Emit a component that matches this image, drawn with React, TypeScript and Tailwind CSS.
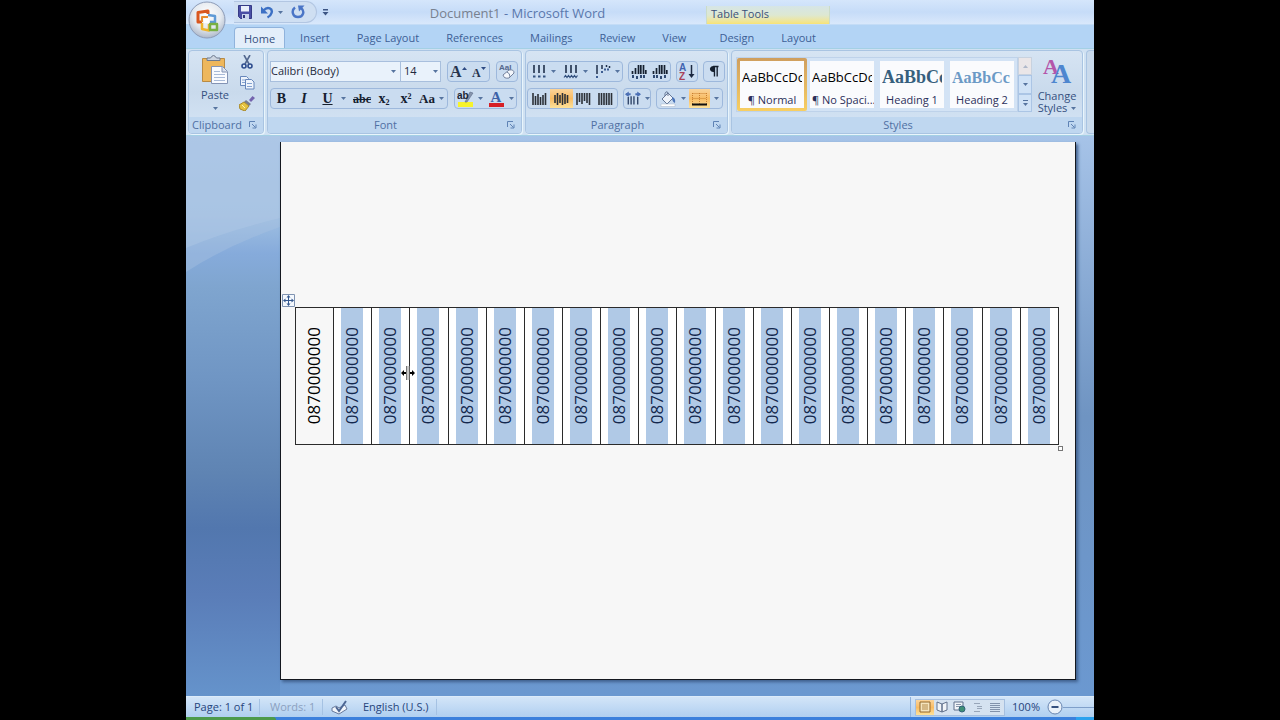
import type { ReactNode } from 'react'
import clsx from 'clsx'

const TABS = ['Home', 'Insert', 'Page Layout', 'References', 'Mailings', 'Review', 'View', 'Design', 'Layout']

const STYLES = [
  { name: '¶ Normal',     sample: 'AaBbCcDc', look: 'text-[13px] text-black' },
  { name: '¶ No Spaci...', sample: 'AaBbCcDc', look: 'text-[13px] text-black' },
  { name: 'Heading 1',    sample: 'AaBbCc',   look: 'text-[18px] font-bold text-[#365f7d] font-["Liberation_Serif",serif]' },
  { name: 'Heading 2',    sample: 'AaBbCc',   look: 'text-[16px] font-bold text-[#6c9ac6] font-["Liberation_Serif",serif]' },
]

const PHONE = '0870000000'
const COLUMNS = Array.from({ length: 20 }, (_, i) => i)

function Arrow({ className = '' }: { className?: string }) {
  return (
    <svg width="5" height="3" viewBox="0 0 5 3" className={clsx('shrink-0', className)}>
      <path d="M0 0h5L2.5 3z" fill="#56749f" />
    </svg>
  )
}

function Box({ children, className }: { children: ReactNode; className: string }) {
  return (
    <div className={clsx('flex h-[21px] shrink-0 items-stretch rounded-sm border border-[#9db8dc] bg-[#cadcf0]', className)}>
      {children}
    </div>
  )
}

function Tool({ label, children, className = 'flex-1', drop = false, on = false }: {
  label: string; children: ReactNode; className?: string; drop?: boolean; on?: boolean
}) {
  return (
    <button type="button" aria-label={label}
      className={clsx('flex items-center justify-center gap-1', className, on && 'bg-linear-to-b from-[#fbd49a] via-[#f8bb62] to-[#fde29a]')}>
      {children}
      {drop && <Arrow />}
    </button>
  )
}

function Launcher() {
  return (
    <svg width="8" height="8" viewBox="0 0 8 8" fill="none" stroke="#5f83b5" className="shrink-0">
      <path d="M.5 6V.5H6" />
      <path d="M3 3l3.5 3.5M7 3.5V7H3.5" />
    </svg>
  )
}

function Group({ title, children, className }: { title: string; children: ReactNode; className: string }) {
  return (
    <section className={clsx('flex flex-col overflow-hidden rounded-sm border border-[#a9c4e2] bg-linear-to-b from-[#d6e4f3] via-[#c9daec] to-[#d5e5f6] shadow-[1px_1px_0_#e8f5fc]', className)}>
      <div className="flex min-h-0 flex-1">{children}</div>
      <div className="flex h-4 items-center bg-[#bfd7f0] pr-1.5 text-[11px] text-[#4f70a3]">
        <span className="flex-1 pr-1 text-center">{title}</span>
        <Launcher />
      </div>
    </section>
  )
}

// text direction is vertical, so the list and alignment icons are all drawn as upright strokes
function ListIcon({ kind }: { kind: 'bullets' | 'numbers' | 'levels' }) {
  return (
    <svg width="16" height="15" viewBox="0 0 16 15" fill="none" stroke="#1f2f4a">
      {kind === 'levels' ? (
        <>
          <path d="M2 1v9M7 1v4" strokeWidth="1.5" />
          <path d="M11.5 1v2M14.5 2v2" strokeWidth="1.5" />
          <path d="M1 13h3M6 8h3M9 5.5h6" stroke="#3d5d92" strokeWidth="2" strokeDasharray="2 1" />
        </>
      ) : (
        <>
          <path d="M3 1v8M8 1v8M13 1v8" strokeWidth="1.6" />
          <path d={kind === 'bullets' ? 'M2 12.500h2.500M7 12.500h2.500M12 12.500h2.500' : 'M1 13.500l1.500-2 1.500 2 1.500-2 1.500 2 1.500-2 1.500 2 1.500-2 1.500 2 1.500-2'}
            stroke="#33517f" strokeWidth={kind === 'bullets' ? 2 : 1.2} />
        </>
      )}
    </svg>
  )
}

function IndentIcon({ flip = false }: { flip?: boolean }) {
  return (
    <svg width="16" height="16" viewBox="0 0 16 16" fill="none" stroke="#16202f">
      <path d="M1.500 7v3M4.500 4v6M7.500 1v9M9.800 1v9M12.500 1v9M14.800 6v4" strokeWidth="1.700" />
      <path d={flip ? 'M1 12.500h6M8 13.500h3M12 12.500h3' : 'M1 12.500h3M5 13.500h3M9 12.500h6'} stroke="#304a72" strokeWidth="3" strokeDasharray="2 1" />
    </svg>
  )
}

function AlignIcon({ ends }: { ends: [number, number][] }) {
  return (
    <svg width="15" height="14" viewBox="0 0 15 14" stroke="#2b3037" strokeWidth="1.600">
      {ends.map(([top, bottom], i) => <path key={i} d={`M${i * 2.5 + 1} ${top}V${bottom}`} />)}
    </svg>
  )
}

function Orb() {
  return (
    <svg width="38" height="38" viewBox="0 0 38 38">
      <defs>
        <radialGradient id="orb" cx="50%" cy="35%" r="65%">
          <stop offset="0" stopColor="#ffffff" />
          <stop offset=".6" stopColor="#e4e9ef" />
          <stop offset="1" stopColor="#aeb9ca" />
        </radialGradient>
      </defs>
      <circle cx="19" cy="19" r="18" fill="url(#orb)" stroke="#8d9cb8" />
      <g fill="none" strokeLinejoin="round">
        <path d="M20 13v-3l-10 1.500v9.500h4" stroke="#d9571f" strokeWidth="3" />
        <path d="M14 21v-5h6" stroke="#e98b2e" strokeWidth="2" />
        <path d="M20 14l7 1v6h-5" stroke="#5f9ad6" strokeWidth="2.500" />
        <path d="M14 22v6l7 1.500v-6.500" stroke="#efb52c" strokeWidth="2.500" />
        <path d="M22 23h7v6h-7z" stroke="#78b043" strokeWidth="2.500" />
      </g>
      <path d="M16 18h5v4h-5z" fill="#fff" />
    </svg>
  )
}

function TitleArea() {
  return (
    <header className="flex h-12 shrink-0 bg-linear-to-b from-[#d5e6fb] from-0% via-[#c6dcf8] via-25% to-[#d9e8fb] to-50%">
      <div className="flex w-12 flex-col bg-linear-to-b from-transparent from-50% to-[#b3d4f5] to-50% pl-0.5 pt-px">
        <button type="button" aria-label="Office Button" className="h-[38px] w-[38px]"><Orb /></button>
      </div>
      <div className="flex min-w-0 flex-1 flex-col">
        <div className="flex h-6 shrink-0">
          <div className="flex w-[472px] shrink-0 items-center">
            <div className="flex h-[22px] w-[83px] items-center gap-1 rounded-r-full border border-l-0 border-[#b2c6e2] bg-[#cfdff2] pl-1">
              <button type="button" aria-label="Save">
                <svg width="14" height="14" viewBox="0 0 14 14">
                  <path d="M.5 .5h13v13h-11l-2-2z" fill="#4a4fa5" stroke="#363b86" />
                  <path d="M3 1h8v5.500H3z" fill="#eaf0fb" />
                  <path d="M4 9h7v5H4z" fill="#c9d5ec" />
                  <path d="M5 10h2v3H5z" fill="#30357c" />
                </svg>
              </button>
              <button type="button" aria-label="Undo" className="ml-1 flex items-center gap-1">
                <svg width="14" height="14" viewBox="0 0 14 14" fill="none">
                  <path d="M3.500 5.500C8 .5 13 4 11.500 8c-.5 2-2 3.500-4 4.500" stroke="#3c70c4" strokeWidth="2.400" />
                  <path d="M1 1.500v7h7z" fill="#3c70c4" />
                </svg>
                <Arrow />
              </button>
              <button type="button" aria-label="Repeat" className="ml-1">
                <svg width="14" height="14" viewBox="0 0 14 14" fill="none">
                  <path d="M4 2.500C0 5.500 1.500 12 7 12s7-6 3-9" stroke="#4a75c6" strokeWidth="2.400" />
                  <path d="M7 .5h6.500L8 6.500z" fill="#4a75c6" />
                </svg>
              </button>
            </div>
            <button type="button" aria-label="Customize Quick Access Toolbar" className="flex w-3 justify-end">
              <svg width="7" height="7" viewBox="0 0 7 7"><path d="M1 0h5v1.500H1zM.5 3h6l-3 3.500z" fill="#3c5584" /></svg>
            </button>
            <h1 className="flex-1 pt-[3px] text-center text-[13px] text-[#5a78ac]">
              <span className="text-[#78818f]">Document1</span> - Microsoft Word
            </h1>
          </div>
          <div className="mt-1.5 w-[124px] shrink-0 border-x border-[#cbdcc9] bg-linear-to-b from-[#d6e5e6] via-[#dde8d2] to-[#f8e375] pl-1 text-[11px] leading-4 text-[#3b5078]">
            Table Tools
          </div>
        </div>
        <nav className="flex min-w-0 flex-1 items-end gap-[3px] border-t border-[#c4dcf6] bg-[#b3d4f5]">
          {TABS.map((tab, i) => (
            <button key={tab} type="button"
              className={clsx('h-[21px] shrink-0 whitespace-nowrap pt-0.5 text-[11px]',
                i === 0 ? 'rounded-t-sm border border-b-0 border-[#90b3dc] bg-[#e3eefa] px-[9px] text-[#35507f]' : 'px-3 text-[#3d5f96]',
                tab === 'Design' && 'ml-1.5')}>
              {tab}
            </button>
          ))}
        </nav>
      </div>
    </header>
  )
}

function ClipboardGroup() {
  return (
    <Group title="Clipboard" className="w-[76px] shrink-0">
      <button type="button" className="flex w-[52px] flex-col items-center pt-[3px] text-[11px] leading-4 text-[#35507f]">
        <svg width="28" height="31" viewBox="0 0 28 31" className="mb-0.5">
          <path d="M1.500 4.500h22v23h-22z" fill="#eeb75c" stroke="#b98b44" />
          <path d="M6 6.500V4h3.500q3-5 6 0H19v2.500z" fill="#cdd5e0" stroke="#6e7a8e" />
          <path d="M10.500 12.500h11l5 5v12h-16z" fill="#f9fbff" stroke="#8494b4" />
          <path d="M21 13v5h5" fill="#d7e0ee" stroke="#8494b4" />
          <path d="M13 17.500h6M13 20.500h11M13 23.500h11M13 26.500h11" stroke="#a9bbd8" />
        </svg>
        Paste
        <Arrow className="mt-1" />
      </button>
      <div className="flex w-3 flex-col items-center gap-1.5 pt-1">
        <button type="button" aria-label="Cut">
          <svg width="14" height="15" viewBox="0 0 14 15" fill="none">
            <path d="M4 0l5 9M10 0L5 9" stroke="#53688f" strokeWidth="1.600" />
            <circle cx="4" cy="11" r="2" stroke="#2e4d8e" strokeWidth="1.600" />
            <circle cx="10" cy="11" r="2" stroke="#2e4d8e" strokeWidth="1.600" />
          </svg>
        </button>
        <button type="button" aria-label="Copy">
          <svg width="16" height="14" viewBox="0 0 16 14" fill="#eef4fc" stroke="#6787bb">
            <path d="M1.500 .5h6l2 2v7h-8z" />
            <path d="M6.500 3.500h6l2.500 2.500v7H6.500z" />
            <path d="M8 7.500h5M8 10.500h5M3 4h3M3 6.500h3" stroke="#86a3d0" />
          </svg>
        </button>
        <button type="button" aria-label="Format Painter">
          <svg width="16" height="15" viewBox="0 0 16 15">
            <path d="M10 4l3.500-4L16 2l-4 4z" fill="#7464ae" />
            <path d="M7 4l5 4-2 2-5-4z" fill="#777d8e" />
            <path d="M5 6l5 4-4 5-5-2-1-4z" fill="#e4c23f" stroke="#a8892b" />
            <path d="M3 9l3 3" stroke="#fff1a8" />
          </svg>
        </button>
      </div>
    </Group>
  )
}

function FontGroup() {
  return (
    <Group title="Font" className="w-[255px] shrink-0">
      <div className="flex flex-1 flex-col gap-1.5 px-0.5 pt-2.5">
        <div className="flex">
          <label className="flex h-[21px] w-[131px] items-center border border-[#a8bfdd] bg-[#e9f2fb] pr-1">
            <select aria-label="Font" className="min-w-0 flex-1 appearance-none bg-transparent text-[11px] text-[#1f2a3c]">
              <option>Calibri (Body)</option>
            </select>
            <Arrow />
          </label>
          <label className="flex h-[21px] w-10 items-center border border-l-0 border-[#a8bfdd] bg-[#e9f2fb] pl-[3px] pr-0.5">
            <select aria-label="Font Size" className="min-w-0 flex-1 appearance-none bg-transparent text-[11px] text-[#1f2a3c]">
              <option>14</option>
            </select>
            <Arrow />
          </label>
          <Box className="ml-1.5 w-[43px] font-['Liberation_Serif',serif] font-bold text-[#26344e]">
            <Tool label="Grow Font">
              <span className="-mr-1 text-[16px]">A</span>
              <svg width="5" height="10" viewBox="0 0 5 10"><path d="M0 3h5L2.500 0z" fill="#2d4a83" /></svg>
            </Tool>
            <Tool label="Shrink Font">
              <span className="-mr-1 pt-0.5 text-[12px]">A</span>
              <svg width="5" height="10" viewBox="0 0 5 10"><path d="M0 0h5L2.500 3z" fill="#2d4a83" /></svg>
            </Tool>
          </Box>
          <Box className="ml-1.5 w-[22px]">
            <Tool label="Clear Formatting">
              <svg width="18" height="17" viewBox="0 0 18 17">
                <text x="1" y="7" fontSize="8" fontWeight="bold" fontFamily="Liberation Sans" fill="#55688c">AaI</text>
                <path d="M5 12l6-5q5-1 5 3l-5 5q-5 1-6-3z" fill="#f4f7fc" stroke="#72819c" />
                <path d="M9 9q3 1 3 5" fill="none" stroke="#72819c" />
              </svg>
            </Tool>
          </Box>
        </div>
        <div className="flex gap-1.5">
          <Box className="w-[178px] font-['Liberation_Serif',serif] text-[14px] font-bold text-[#15202f]">
            <Tool label="Bold" className="w-[21px]">B</Tool>
            <Tool label="Italic" className="w-6"><i>I</i></Tool>
            <Tool label="Underline" className="w-9" drop><u className="mr-1">U</u></Tool>
            <Tool label="Strikethrough" className="w-5"><s className="text-[12px]">abc</s></Tool>
            <Tool label="Subscript" className="w-6"><span>x<sub className="text-[8px]">2</sub></span></Tool>
            <Tool label="Superscript" className="w-5"><span>x<sup className="text-[8px]">2</sup></span></Tool>
            <Tool label="Change Case" drop><span className="text-[13px]">Aa</span></Tool>
          </Box>
          <Box className="w-[63px]">
            <Tool label="Text Highlight Color" drop>
              <svg width="17" height="17" viewBox="0 0 17 17">
                <path d="M1 12h15v5H1z" fill="#f6f32b" />
                <path d="M8 12l5-10 3 1-6 9z" fill="#8795ad" stroke="#5b6a86" strokeWidth=".6" />
                <text x="0" y="9" fontSize="10" fontWeight="bold" fontFamily="Liberation Sans" fill="#1b2535">ab</text>
              </svg>
            </Tool>
            <Tool label="Font Color" drop>
              <svg width="17" height="17" viewBox="0 0 17 17">
                <text x="2.500" y="12" fontSize="15" fontWeight="bold" fontFamily="Liberation Serif" fill="#3c62a8">A</text>
                <path d="M1 13h15v4H1z" fill="#d61f26" />
              </svg>
            </Tool>
          </Box>
        </div>
      </div>
    </Group>
  )
}

function ParagraphGroup() {
  return (
    <Group title="Paragraph" className="w-[203px] shrink-0">
      <div className="flex flex-1 flex-col gap-1.5 px-px pt-2.5">
        <div className="flex gap-[5px]">
          <Box className="w-[96px]">
            <Tool label="Bullets" drop><ListIcon kind="bullets" /></Tool>
            <Tool label="Numbering" drop className="w-[34px]"><ListIcon kind="numbers" /></Tool>
            <Tool label="Multilevel List" drop><ListIcon kind="levels" /></Tool>
          </Box>
          <Box className="w-[43px]">
            <Tool label="Decrease Indent"><IndentIcon /></Tool>
            <Tool label="Increase Indent"><IndentIcon flip /></Tool>
          </Box>
          <Box className="w-[22px]">
            <Tool label="Sort">
              <svg width="17" height="18" viewBox="0 0 17 18">
                <text x="0" y="8" fontSize="10" fontWeight="bold" fontFamily="Liberation Sans" fill="#3f63b0">A</text>
                <text x="0" y="17" fontSize="10" fontWeight="bold" fontFamily="Liberation Sans" fill="#a8425a">Z</text>
                <path d="M12.500 2v11" stroke="#1c2940" strokeWidth="1.500" />
                <path d="M9.500 11h6l-3 4z" fill="#1c2940" />
              </svg>
            </Tool>
          </Box>
          <Box className="w-[22px]">
            <Tool label="Show Paragraph Marks">
              <svg width="10" height="13" viewBox="0 0 11 13">
                <path d="M4.500 1h6M6 1v11M9 1v11" stroke="#15202f" strokeWidth="1.500" />
                <path d="M5.500 .5v6.500C-.5 7.500-.5 0 5.500 .5z" fill="#15202f" />
              </svg>
            </Tool>
          </Box>
        </div>
        <div className="flex gap-[5px]">
          <Box className="w-[91px]">
            <Tool label="Align Bottom"><AlignIcon ends={[[1, 13], [4, 13], [2, 13], [5, 13], [3, 13], [1, 13]]} /></Tool>
            <Tool label="Center" on><AlignIcon ends={[[3, 11], [1, 13], [3, 11], [1, 13], [2, 12], [3, 11]]} /></Tool>
            <Tool label="Align Top"><AlignIcon ends={[[1, 13], [1, 10], [1, 12], [1, 9], [1, 11], [1, 13]]} /></Tool>
            <Tool label="Justify"><AlignIcon ends={[[1, 13], [1, 13], [1, 13], [1, 13], [1, 13], [1, 13]]} /></Tool>
          </Box>
          <Box className="w-[28px]">
            <Tool label="Line Spacing" drop className="w-full">
              <svg width="16" height="15" viewBox="0 0 17 15" fill="none">
                <path d="M3.500 6v8M6.500 5v9M9.500 5v9M13.500 6v8" stroke="#33486c" strokeWidth="1.500" />
                <path d="M1 3h5M11 3h5" stroke="#4b6fb5" strokeWidth="2" />
                <path d="M4 0L0 3l4 3zM13 0l4 3-4 3z" fill="#4b6fb5" />
              </svg>
            </Tool>
          </Box>
          <Box className="w-[67px]">
            <Tool label="Shading" drop>
              <svg width="17" height="16" viewBox="0 0 17 16">
                <path d="M2 8l6-6 5 5-6 6z" fill="#eef3fa" stroke="#667795" />
                <path d="M8 5V1.500q-2-2-3 1V5" fill="none" stroke="#667795" />
                <path d="M12 6q4 1 3 6-3-1-3-6z" fill="#4b74b8" />
                <path d="M1 13h14v2.500H1z" fill="#fff" stroke="#a6b4c9" strokeWidth=".5" />
              </svg>
            </Tool>
            <Tool label="Borders" className="w-[21px]" on>
              <svg width="15" height="14" viewBox="0 0 15 14" fill="none">
                <path d="M.5 1.500h14M.5 6.500h14M.5 1v11M7.500 1v11M14.500 1v11" stroke="#c98030" strokeDasharray="1 1" />
                <path d="M0 12.500h15" stroke="#111" strokeWidth="2" />
              </svg>
            </Tool>
            <Tool label="Borders menu" className="w-3"><Arrow /></Tool>
          </Box>
        </div>
      </div>
    </Group>
  )
}

function StylesGroup() {
  return (
    <Group title="Styles" className="min-w-0 flex-1">
      <div className="ml-1 mt-1.5 flex h-[55px] shrink-0 border border-[#bed2ea] bg-[#d3e3f5]">
        {STYLES.map((s, i) => (
          <button key={s.name} type="button"
            className={clsx('flex w-[70px] flex-col p-[3px]', i === 0 && 'rounded-xs bg-linear-to-b from-[#cf9e5e] to-[#f8cf62]')}>
            <span className="flex w-full flex-1 flex-col overflow-hidden bg-[#fafbfd] px-0.5">
              <span className={clsx('flex h-[31px] items-center overflow-hidden pt-0.5 whitespace-nowrap', s.look)}>{s.sample}</span>
              <span className="whitespace-nowrap text-center text-[11px] leading-4 text-[#2b2f5a]">{s.name}</span>
            </span>
          </button>
        ))}
      </div>
      <div className="mt-1.5 flex h-[55px] w-[14px] shrink-0 flex-col">
        <button type="button" aria-label="Previous styles" className="flex flex-1 items-center justify-center border border-[#c8d2df] bg-[#eae6e8]">
          <Arrow className="rotate-180 opacity-40" />
        </button>
        <button type="button" aria-label="Next styles" className="flex flex-1 items-center justify-center border border-[#abc5e5] bg-[#d0e2f6]"><Arrow /></button>
        <button type="button" aria-label="More styles" className="flex flex-1 flex-col items-center justify-center gap-0.5 border border-[#abc5e5] bg-[#d0e2f6]">
          <span className="h-px w-[5px] bg-[#56749f]" />
          <Arrow />
        </button>
      </div>
      <button type="button" className="flex flex-1 flex-col items-center pt-[5px] text-[11px] leading-3 text-[#35507f]">
        <svg width="30" height="30" viewBox="0 0 30 30" fontFamily="Liberation Serif" fontWeight="bold">
          <text x="1" y="18" fontSize="22" fill="#b455a9">A</text>
          <text x="9" y="27" fontSize="28" fill="#4e86cf">A</text>
        </svg>
        <span className="pt-1">Change</span>
        <span className="flex items-center gap-1">Styles <Arrow /></span>
      </button>
    </Group>
  )
}

function Document() {
  return (
    <main className="relative flex min-h-0 flex-1 bg-linear-to-b from-[#a6c3e8] from-0% via-[#6f94c2] via-50% to-[#6b98d0] to-100% pb-4 pl-[94px] pr-[18px] pt-1.5">
      <svg viewBox="0 0 94 560" preserveAspectRatio="none" className="absolute left-0 top-0 h-full w-[94px]">
        <defs>
          <linearGradient id="sky" x1="0" y1="0" x2="0" y2="1">
            <stop offset="0" stopColor="#abc8ec" />
            <stop offset=".14" stopColor="#a0c0e2" />
            <stop offset=".21" stopColor="#86abdb" />
            <stop offset=".27" stopColor="#7fa5cf" />
            <stop offset=".43" stopColor="#7096c4" />
            <stop offset=".6" stopColor="#5f84b3" />
            <stop offset=".7" stopColor="#5277ae" />
            <stop offset=".82" stopColor="#5a7db8" />
            <stop offset="1" stopColor="#6593cb" />
          </linearGradient>
        </defs>
        <path d="M0 0h94v560H0z" fill="url(#sky)" />
        <path d="M0 0h94v82Q40 95 0 112z" fill="#b3cce8" opacity=".45" />
        <path d="M0 0h94v91Q40 110 0 136z" fill="#a9c2e2" opacity=".4" />
      </svg>
      <article className="relative flex-1 border border-t-0 border-[#14181f] bg-[#f7f7f7] pl-[14px] pr-4 pt-[165px] shadow-[2px_2px_3px_#3f5f8c]">
        <div className="relative">
          <table className="w-full table-fixed border-collapse">
            <tbody>
              <tr className="h-[137px]">
                {COLUMNS.map(i => (
                  <td key={i} className="border border-[#2b2b2b] p-0">
                    <div className={clsx('flex h-[136px]', i > 0 && 'bg-white')}>
                      <div className={clsx('ml-[7px] flex w-[22px] items-center justify-center', i > 0 ? 'bg-[#b0c9e6] text-[#13274d]' : 'text-black')}>
                        <span className="rotate-180 text-[17px] leading-[22px] [writing-mode:vertical-rl]">{PHONE}</span>
                      </div>
                    </div>
                  </td>
                ))}
              </tr>
            </tbody>
          </table>
          {/* table move and resize handles */}
          <svg width="13" height="13" viewBox="0 0 13 13" className="absolute -left-[13px] -top-[13px]">
            <path d="M.5 .5h12v12H.5z" fill="#f4f8fd" stroke="#7f93b1" />
            <path d="M6.500 2v9M2 6.500h9" stroke="#34588f" />
            <path d="M6.500 1l2 2.500h-4zM6.500 12l2-2.500h-4zM1 6.500l2.500-2v4zM12 6.500l-2.500-2v4z" fill="#34588f" />
          </svg>
          <span className="absolute -bottom-1.5 -right-1 h-[5px] w-[5px] border border-[#777] bg-white" />
          {/* column resize pointer */}
          <svg width="14" height="16" viewBox="0 0 14 16" className="absolute left-[106px] top-[58px]">
            <path d="M7 1v14" stroke="#c8c8c8" strokeWidth="2" />
            <path d="M5.500 1v14M8.500 1v14" stroke="#666" strokeWidth=".9" />
            <path d="M0 8l3-3v2h2v2H3v2zM14 8l-3-3v2H9v2h2v2z" fill="#000" />
          </svg>
        </div>
      </article>
    </main>
  )
}

function StatusBar() {
  return (
    <footer className="shrink-0">
      <div className="flex h-[21px] items-center border-t border-[#dcebfa] bg-linear-to-b from-[#d3e5f8] to-[#b0cff0] text-[11px] text-[#27457c]">
        <span className="w-[74px] border-r border-[#a5c2e3] pl-2">Page: 1 of 1</span>
        <span className="w-[63px] border-r border-[#a5c2e3] pl-2.5 text-[#8ba0bf]">Words: 1</span>
        <button type="button" aria-label="Proofing" className="flex w-10 justify-center pr-2">
          <svg width="17" height="15" viewBox="0 0 17 15">
            <path d="M1 8l4-2 3 2 6-3 2 4-8 5-7-3z" fill="#f1f5fb" stroke="#66799c" />
            <path d="M5 7l3 4 7-10" fill="none" stroke="#4c6694" strokeWidth="2" />
          </svg>
        </button>
        <span className="w-[74px] whitespace-nowrap border-r border-[#a5c2e3]">English (U.S.)</span>
        <span className="flex-1" />
        <div className="flex h-full items-center border-l border-[#8fb2dc] pl-1">
          <div className="flex h-[17px] w-[90px] border border-[#a5bfdf] bg-[#d5e2f0]">
            <Tool label="Print Layout" on>
              <svg width="12" height="12" viewBox="0 0 12 12"><path d="M1 1h10v10H1z" fill="#f5e4bd" stroke="#92682c" /><path d="M3 4h6M3 6h6M3 8h6" stroke="#b58c4d" /></svg>
            </Tool>
            <Tool label="Full Screen Reading">
              <svg width="12" height="12" viewBox="0 0 12 12" fill="#f1f4f8" stroke="#61718c"><path d="M1 1l5 2v8L1 9zM11 1L6 3v8l5-2z" /></svg>
            </Tool>
            <Tool label="Web Layout">
              <svg width="13" height="12" viewBox="0 0 13 12"><path d="M1 1h9v8H1z" fill="#f1f4f8" stroke="#61718c" /><path d="M3 3.500h5M3 5.500h5" stroke="#8a97ab" /><circle cx="9" cy="8" r="3" fill="#3f8f76" stroke="#33637a" /></svg>
            </Tool>
            <Tool label="Outline">
              <svg width="12" height="12" viewBox="0 0 12 12"><path d="M2 2.500h6M5 5.500h5M5 7.500h5M2 10.500h6" stroke="#98a6b9" /></svg>
            </Tool>
            <Tool label="Draft">
              <svg width="12" height="12" viewBox="0 0 12 12"><path d="M1 2.500h10M1 4.500h10M1 6.500h10M1 8.500h10M1 10.500h10" stroke="#8292aa" /></svg>
            </Tool>
          </div>
          <span className="w-[42px] text-center">100%</span>
          <button type="button" aria-label="Zoom Out">
            <svg width="16" height="16" viewBox="0 0 16 16"><circle cx="8" cy="8" r="7" fill="#e9f0f9" stroke="#6784b0" /><path d="M4.500 8h7" stroke="#35507f" strokeWidth="2" /></svg>
          </button>
          <span className="h-px w-[31px] bg-[#7f9fca]" />
        </div>
      </div>
      <div className="flex h-[3px] bg-[#3c80dc]">
        <span className="w-[90px] rounded-tr-sm bg-[#4d9a4b]" />
        <span className="flex-1" />
        <span className="w-[18px] bg-[#2ba2ee]" />
      </div>
    </footer>
  )
}

export default function App() {
  return (
    <div className="flex h-screen bg-black px-[186px] font-['Open_Sans',sans-serif]">
      <div className="flex min-w-0 flex-1 flex-col overflow-hidden">
        <TitleArea />
        <div className="flex h-[88px] shrink-0 gap-[3px] border-y border-[#a4d0e4] bg-[#d0e1f2] py-px pl-0.5">
          <ClipboardGroup />
          <FontGroup />
          <ParagraphGroup />
          <StylesGroup />
          <span className="w-2 rounded-l-sm border border-r-0 border-[#a9c4e2] bg-[#c9daec]" />
        </div>
        <Document />
        <StatusBar />
      </div>
    </div>
  )
}
